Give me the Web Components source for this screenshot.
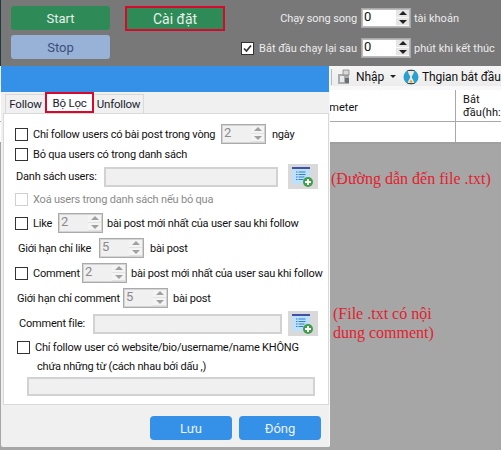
<!DOCTYPE html>
<html lang="vi"><head><meta charset="utf-8"><style>
html,body{margin:0;padding:0;width:501px;height:450px;overflow:hidden;background:#a6a6a6}
body{font:11px Roboto,sans-serif;color:#111}
</style></head><body>
<x-app></x-app>
<script>
const def=(name,html)=>{
  const t=document.createElement('template');t.innerHTML=html;
  customElements.define(name,class extends HTMLElement{
    constructor(){super();this.attachShadow({mode:'open'}).appendChild(t.content.cloneNode(true));}
    connectedCallback(){
      const v=this.shadowRoot.querySelector('[data-v]');
      if(v)v.textContent=this.getAttribute('value')||'';
    }
  });
};
def('x-btn',`<style>:host{display:flex;align-items:center;justify-content:center;box-sizing:border-box;border-radius:3px;background:var(--bg,#2e8b57);color:var(--fg,#e6f0ea);font-size:var(--fs,13px);height:24px;width:99px;flex:none}</style><slot></slot>`);
def('x-spin',`<style>
:host{display:flex;box-sizing:border-box;width:45px;height:20px;border:1px solid var(--b,#aaa);box-shadow:inset 0 0 0 1px var(--b2,#d4d4d4);background:var(--f,#f0f0f0);color:var(--c,#8a8a8a);flex:none;letter-spacing:0}
.v{flex:1;font-size:13px;line-height:15px;padding-left:2px}
.a{width:13px;margin:1px 1px 1px 0;display:flex;flex-direction:column;background:var(--ab,#f4f4f4);gap:1px}
.a i{flex:1;display:flex;align-items:center;justify-content:center;border-bottom:1px solid var(--as,#e2e2e2)}
.a b{width:0;height:0;border-left:4px solid transparent;border-right:4px solid transparent}
.u{border-bottom:4px solid var(--ar,#a0a0a0)}.d{border-top:4px solid var(--ar,#a0a0a0)}
</style><div class="v" data-v></div><div class="a"><i><b class="u"></b></i><i><b class="d"></b></i></div>`);
def('x-check',`<style>
:host{display:flex;align-items:center;gap:5px;flex:none}
.b{width:11px;height:11px;border:1px solid var(--cb,#333);background:var(--cf,#fff);flex:none;display:flex}
svg{display:none}
:host([checked]) svg{display:block}
</style><span class="b"><svg width="11" height="11" viewBox="0 0 11 11"><path d="M2 5.500 4.500 8 9 2.500" fill="none" stroke="#333" stroke-width="1.700"/></svg></span><slot></slot>`);
def('x-field',`<style>:host{display:block;box-sizing:border-box;height:var(--h,20px);border:2px solid #d2d2d2;background:#f0f0f0;flex:none}</style>`);
def('x-row',`<style>:host{display:flex;align-items:center;white-space:nowrap;box-sizing:border-box;height:var(--rh,20px);flex:none}</style><slot></slot>`);
def('x-addlist',`<style>:host{display:block;width:30px;height:25px;background:#d9d9d9;flex:none}svg{display:block}</style>
<svg width="30" height="25" viewBox="0 0 30 25"><rect x="4" y="5" width="18" height="15" fill="#bfe0fb"/><rect x="4" y="3" width="18" height="2" fill="#3f51a8"/>
<path d="M8 8h1.500M8 10.500h1.500M8 13h1.500M8 15.500h1.500" stroke="#2f80c8" stroke-width="1.200"/><path d="M10.500 8h7M10.500 10.500h7M10.500 13h6M10.500 15.500h5" stroke="#2f80c8" stroke-width="1.200"/>
<circle cx="20" cy="18" r="5" fill="#3f9e48"/><path d="M20 15v6M17 18h6" stroke="#fff" stroke-width="2"/></svg>`);
def('x-tab',`<style>:host{display:flex;align-items:center;justify-content:center;box-sizing:border-box;height:19px;margin-top:2px;background:#f0f0f0;border:1px solid #d9d9d9;border-bottom:0;font-size:11.500px;color:#1c1c30;flex:none;margin-left:-1px}
:host([active]){background:#fff;height:21px;margin-top:0;border:2px solid #d8082c;position:relative;z-index:1}</style><slot></slot>`);
def('x-dialog',`<style>
:host{position:absolute;left:1px;top:66px;width:329px;height:381px;background:#f0f0f0;display:flex;flex-direction:column;box-sizing:border-box;border-right:1px solid #f8f8f8;border-radius:0 0 2px 2px;letter-spacing:-.2px}
.title{height:26px;background:#3590e8;flex:none}
.tabs{display:flex;height:21px;padding-left:5px;box-sizing:border-box;flex:none;align-items:flex-start}
.panel{box-sizing:border-box;margin-left:2px;width:326px;height:292px;border:1px solid #d9d9d9;background:#fff;padding-top:10px;flex:none;display:flex;flex-direction:column}
.foot{display:flex;gap:7px;padding:11px 0 0 149px;letter-spacing:0}
.foot x-btn{width:82px;--bg:#3590e8;--fg:#eaf3fc;border-radius:4px}
</style>
<div class="title"></div>
<div class="tabs"><slot name="tabs"></slot></div>
<div class="panel"><slot></slot></div>
<div class="foot"><x-btn>Lưu</x-btn><x-btn>Đóng</x-btn></div>`);
def('x-top',`<style>
:host{display:flex;box-sizing:border-box;height:66px;background:#787878;color:#ececec;padding:6px 0 0 10px;border-left:1px solid #1d3a40}
.l{display:flex;flex-direction:column;gap:5px;width:99px;flex:none}
.stop{--bg:#97b2d6;--fg:#3c4e7a}
.c{margin-left:15px;width:100px;height:25px;border:2px solid #d8082c;border-radius:0;--fs:14px}
.r{margin-left:16px;padding-top:2px;display:grid;grid-template-columns:116px 54px auto;grid-auto-rows:20px;row-gap:10px;align-items:center;white-space:nowrap;--f:#fff;--c:#111;--b:#a8a8a8;--b2:#bcbcbc;--ar:#222;--ab:#e6e6e6;--as:#fafafa;flex:none;align-self:flex-start}
.r x-spin{width:50px;margin-left:4px}
.r span.n{padding-left:3px}
.lab{text-align:right;letter-spacing:-.1px}
.lab2{display:flex;justify-content:space-between}
</style>
<div class="l"><x-btn>Start</x-btn><x-btn class="stop">Stop</x-btn></div>
<x-btn class="c">Cài đặt</x-btn>
<div class="r">
 <span class="lab">Chạy song song</span><x-spin value="0"></x-spin><span class="n">tài khoản</span>
 <x-check class="lab2" checked>Bắt đầu chạy lại sau</x-check><x-spin value="0"></x-spin><span class="n">phút khi kết thúc</span>
</div>`);
def('x-tools',`<style>
:host{display:flex;align-items:center;box-sizing:border-box;height:24px;padding:0 0 3px 331px;background:linear-gradient(#f6f6f6,#ececec 85%,#f8f8f8 85%);white-space:nowrap;color:#111;overflow:hidden;font-size:12px;letter-spacing:-.1px}
.sep{width:1px;height:16px;background:#bbb;margin-right:5px}
svg{flex:none;display:block}
.a{width:0;height:0;border-left:3px solid transparent;border-right:3px solid transparent;border-top:3px solid #222;margin:0 7px 0 6px}
</style>
<span class="sep"></span>
<svg width="14" height="16" viewBox="0 0 14 16" style="margin-right:5px"><rect x="1" y="5" width="11" height="10" fill="#a9adb0"/><rect x="3" y="7" width="4" height="6" fill="#e8e8e8"/><path d="M6 1h6v5H6z" fill="#d8d8d8" stroke="#777" stroke-width=".7"/><path d="M8 9h4v5H8z" fill="#6a6e72"/></svg>
<span>Nhập</span><span class="a"></span>
<svg width="16" height="16" viewBox="0 0 16 16" style="margin-right:3px"><circle cx="8" cy="8" r="7.500" fill="#2aa0d2"/><path d="M4.500 1.500h7M4.500 14.500h7" stroke="#444" stroke-width="1"/><path d="M5 2h6c0 3-2 4-2.300 6 .3 2 2.300 3 2.300 6H5c0-3 2-4 2.300-6C7 6 5 5 5 2z" fill="#f2ead6"/><path d="M6.200 13.500 8 10.500l1.800 3z" fill="#e8a33a"/></svg>
<span>Thgian bắt đầu</span>`);
def('x-table',`<style>
:host{display:block;background:#fff;height:54px;box-sizing:border-box;border-bottom:2px solid #a0a0a0;white-space:nowrap;overflow:hidden}
.h,.b{display:grid;grid-template-columns:455px 1fr}
.h{height:31px;border-bottom:1px solid #a8a8a8}
.b{height:20px}
.h>div,.b>div{box-sizing:border-box}
.h>div+div,.b>div+div{border-left:1px solid #a8a8a8}
.p{padding:11px 0 0 307px}
.q{padding:3px 0 0 7px;line-height:13px;letter-spacing:.1px}
</style>
<div class="h"><div class="p">Parameter</div><div class="q">Bắt<br>đầu(hh:</div></div>
<div class="b"><div></div><div></div></div>`);
def('x-notes',`<style>
:host{display:block;height:306px;background:#a6a6a6;padding-left:331px;box-sizing:border-box;color:#e4202e;font:16px/19px "Liberation Serif",serif;white-space:nowrap}
.a{padding-top:25px}.b{padding:116px 0 0 2px}
</style><div class="a">(Đường dẫn đến file .txt)</div><div class="b">(File .txt có nội<br>dung comment)</div>`);
def('x-app',`<style>:host{display:block;position:relative;width:501px;height:450px;overflow:hidden}
.dis{color:#8a8a8a;--cb:#d0d0d0}
</style>
<x-top></x-top><x-tools></x-tools><x-table></x-table><x-notes></x-notes>
<x-dialog>
 <x-tab slot="tabs" style="width:41px">Follow</x-tab>
 <x-tab slot="tabs" active style="width:49px">Bộ Lọc</x-tab>
 <x-tab slot="tabs" style="width:51px">Unfollow</x-tab>
 <x-row style="padding-left:11px"><x-check style="width:206px">Chỉ follow users có bài post trong vòng</x-check><x-spin value="2"></x-spin><span style="margin-left:6px">ngày</span></x-row>
 <x-row style="--rh:18px;margin-top:1px;padding-left:11px"><x-check>Bỏ qua users có trong danh sách</x-check></x-row>
 <x-row style="--rh:25px;margin-top:1px;padding-left:12px"><span style="width:88px">Danh sách users:</span><x-field style="width:174px"></x-field><x-addlist style="margin-left:10px"></x-addlist></x-row>
 <x-row style="--rh:18px;margin-top:1px;padding-left:11px"><x-check class="dis">Xoá users trong danh sách nếu bỏ qua</x-check></x-row>
 <x-row style="margin-top:5px;padding-left:11px"><x-check style="width:43px">Like</x-check><x-spin value="2"></x-spin><span style="margin-left:4px">bài post mới nhất của user sau khi follow</span></x-row>
 <x-row style="margin-top:5px;padding-left:14px"><span style="width:81px">Giới hạn chỉ like</span><x-spin value="5"></x-spin><span style="margin-left:6px">bài post</span></x-row>
 <x-row style="margin-top:5px;padding-left:11px"><x-check style="width:67px">Comment</x-check><x-spin value="2"></x-spin><span style="margin-left:4px">bài post mới nhất của user sau khi follow</span></x-row>
 <x-row style="margin-top:5px;padding-left:13px"><span style="width:106px">Giới hạn chỉ comment</span><x-spin value="5"></x-spin><span style="margin-left:5px">bài post</span></x-row>
 <x-row style="--rh:25px;margin-top:3px;padding-left:15px"><span style="width:74px">Comment file:</span><x-field style="width:189px"></x-field><x-addlist style="margin-left:6px"></x-addlist></x-row>
 <x-row style="--rh:18px;margin-top:2px;padding-left:13px"><x-check>Chỉ follow user có website/bio/username/name KHÔNG</x-check></x-row>
 <x-row style="--rh:18px;margin-top:1px;padding-left:33px">chứa những từ (cách nhau bởi dấu ,)</x-row>
 <x-row style="--rh:19px;margin-top:2px;padding-left:23px"><x-field style="width:288px;--h:19px"></x-field></x-row>
</x-dialog>`);
</script>
</body></html>
